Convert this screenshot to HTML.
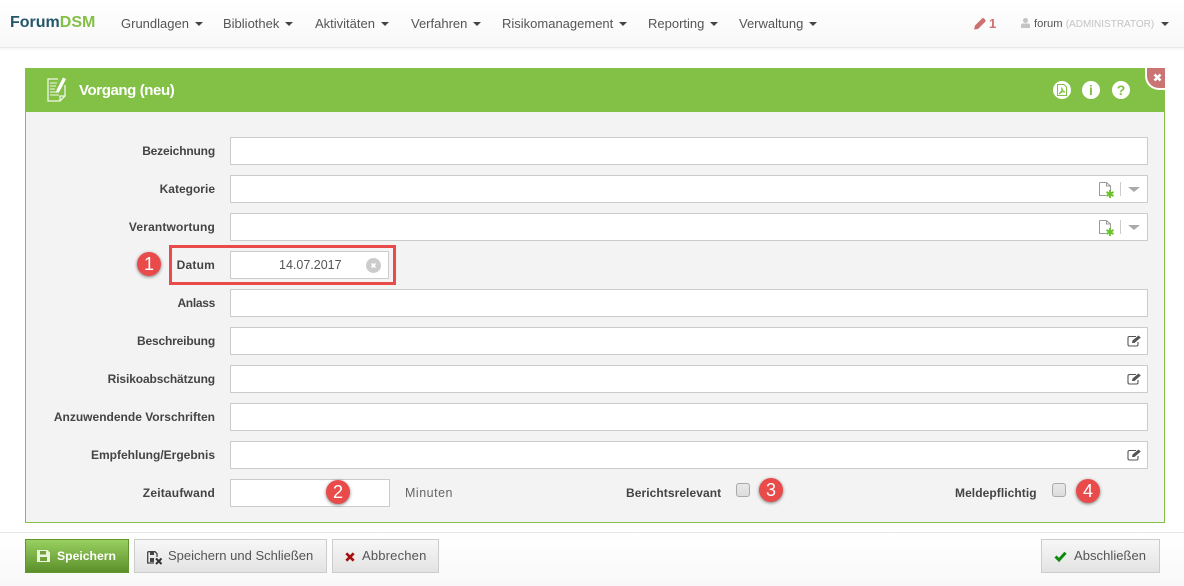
<!DOCTYPE html>
<html lang="de"><head><meta charset="utf-8"><title>Vorgang (neu)</title>
<style>
*{box-sizing:border-box}
html,body{margin:0;padding:0;width:1184px;height:586px;overflow:hidden;background:#fff;font-family:"Liberation Sans",sans-serif;font-size:13px;color:#444}
.a{position:absolute}
#nav{left:0;top:0;width:1184px;height:48px;background:linear-gradient(#fff,#f8f8f8);border-bottom:1px solid #e8e8e8;box-shadow:0 1px 2px rgba(0,0,0,.06)}
.m{position:absolute;top:15px;font-size:13px;color:#555;white-space:nowrap;line-height:18px}
.m i,.car{display:inline-block;width:0;height:0;border-left:4px solid transparent;border-right:4px solid transparent;border-top:4px solid #444;vertical-align:2px;margin-left:2px}
.lb{position:absolute;right:969px;font-weight:bold;font-size:12px;color:#444;white-space:nowrap;line-height:16px;text-align:right}
.in{position:absolute;left:230px;width:918px;height:28px;background:#fff;border:1px solid #ccc}
.btn{position:absolute;top:539px;height:34px;border:1px solid #ccc;background:linear-gradient(#f7f7f7,#e3e3e3);font-size:13px;color:#555;line-height:32px;white-space:nowrap}
.badge{position:absolute;width:24px;height:24px;border-radius:50%;background:#e94b4b;color:#fff;font-size:18px;line-height:24px;text-align:center;box-shadow:0 1px 3px rgba(0,0,0,.5)}
.cb{position:absolute;width:14px;height:14px;border:1px solid #aaa;border-radius:3px;background:linear-gradient(#e8e8e8,#ddd)}
.hi{position:absolute;top:81px;width:18px;height:18px;border-radius:50%;background:#fff;color:#82c146;font-weight:bold;font-size:14px;line-height:18px;text-align:center}
svg{position:absolute;overflow:visible}
</style></head><body>

<div id="nav" class="a"></div>
<div class="a" style="left:10px;top:13px;font-size:16px;font-weight:bold;line-height:20px;color:#24566a">Forum<span style="color:#82c146">DSM</span></div>
<div class="m" style="left:121px">Grundlagen <i></i></div>
<div class="m" style="left:223px">Bibliothek <i></i></div>
<div class="m" style="left:315px">Aktivitäten <i></i></div>
<div class="m" style="left:411px">Verfahren <i></i></div>
<div class="m" style="left:502px">Risikomanagement <i></i></div>
<div class="m" style="left:648px">Reporting <i></i></div>
<div class="m" style="left:739px">Verwaltung <i></i></div>
<svg style="left:974px;top:17px" width="12" height="13" viewBox="0 0 12 13"><path d="M0 12.500 L1 8.500 L8 1.500 Q9 .5 10 1.500 L11.500 3 Q12 4 11 5 L4 12 Z" fill="#cc7070"/></svg>
<div class="a" style="left:989px;top:15px;font-size:13px;font-weight:bold;color:#cc7070;line-height:18px">1</div>
<svg style="left:1021px;top:18px" width="9" height="10" viewBox="0 0 9 10"><circle cx="4.500" cy="2.500" r="2.500" fill="#c4c4c4"/><path d="M0 10V7.500Q0 5.500 2 5.500H7Q9 5.500 9 7.500V10Z" fill="#c4c4c4"/></svg>
<div class="a" style="left:1034px;top:15px;font-size:11.200px;line-height:18px;color:#555;white-space:nowrap">forum <span style="color:#c4c4c4;font-size:10px">(ADMINISTRATOR)</span></div>
<div class="a car" style="left:1161px;top:22px;margin:0"></div>

<div class="a" style="left:25px;top:68px;width:1140px;height:455px;background:#f3f3f3;border:1px solid #82c146"></div>
<div class="a" style="left:25px;top:68px;width:1140px;height:44px;background:#82c146"></div>
<div class="a" style="left:1145px;top:68px;width:20px;height:22px;background:#cb7474;border-left:2px solid #fff;border-bottom:2px solid #fff;border-bottom-left-radius:14px"></div>
<svg style="left:1153px;top:73px" width="9" height="9" viewBox="0 0 9 9"><path d="M1.500 1.500L7.500 7.500M7.500 1.500L1.500 7.500" stroke="#fff" stroke-width="2.600"/></svg>
<svg style="left:47px;top:76px" width="19" height="26" viewBox="0 0 19 26" fill="none" stroke="#f0f8e8" stroke-width="1.300"><path d="M11 3H1V25H13L18 20V9"/><path d="M13 25V20H18"/><path d="M3 7H10M3 10H9M3 13H8M3 16H12M3 19H12" stroke-width="1.100"/><path d="M9.500 14L16 1.500L19 3L12.500 15.500L9.500 17Z" fill="#fff" stroke="none"/></svg>
<div class="a" style="left:79px;top:81px;font-size:15px;font-weight:bold;color:#fff;line-height:19px;letter-spacing:-.4px">Vorgang (neu)</div>
<div class="hi" style="left:1053px"></div>
<svg style="left:1057px;top:84px" width="10" height="12" viewBox="0 0 10 12" fill="none" stroke="#82c146" stroke-width="1"><path d="M.5.500H7L9.500 3V11.500H.5Z"/><path d="M2 10L5 6.500 4.500 3.500 6 7 8 8 5 8Z"/></svg>
<div class="hi" style="left:1082px">i</div>
<div class="hi" style="left:1112px">?</div>

<div class="lb" style="top:143px;letter-spacing:-.17px">Bezeichnung</div><div class="in" style="top:137px"></div>
<div class="lb" style="top:181px">Kategorie</div><div class="in" style="top:175px"></div>
<div class="lb" style="top:219px;letter-spacing:.16px">Verantwortung</div><div class="in" style="top:213px"></div>
<div class="lb" style="top:257px;letter-spacing:.2px">Datum</div>
<div class="a" style="left:169px;top:245px;width:227px;height:40px;border:3px solid #e94b4b"></div>
<div class="in" style="top:251px;width:159px"></div>
<div class="a" style="left:279px;top:257px;font-size:12.500px;color:#555;line-height:17px">14.07.2017</div>
<div class="a" style="left:366px;top:258px;width:15px;height:15px;border-radius:50%;background:#ccc"></div>
<svg style="left:370px;top:262px" width="7" height="7" viewBox="0 0 7 7"><path d="M1.500 1.500L5.500 5.500M5.500 1.500L1.500 5.500" stroke="#fff" stroke-width="1.600"/></svg>
<div class="lb" style="top:295px;letter-spacing:-.3px">Anlass</div><div class="in" style="top:289px"></div>
<div class="lb" style="top:333px;letter-spacing:-.17px">Beschreibung</div><div class="in" style="top:327px"></div>
<div class="lb" style="top:371px;letter-spacing:-.12px">Risikoabschätzung</div><div class="in" style="top:365px"></div>
<div class="lb" style="top:409px">Anzuwendende Vorschriften</div><div class="in" style="top:403px"></div>
<div class="lb" style="top:447px">Empfehlung/Ergebnis</div><div class="in" style="top:441px"></div>
<div class="lb" style="top:485px;letter-spacing:.2px">Zeitaufwand</div><div class="in" style="top:479px;width:160px"></div>
<div class="a" style="left:405px;top:485px;font-size:12.500px;color:#666;line-height:17px;letter-spacing:.5px">Minuten</div>
<div class="a" style="left:626px;top:485px;font-size:12px;font-weight:bold;line-height:16px;color:#444;white-space:nowrap;letter-spacing:.07px">Berichtsrelevant</div>
<div class="cb" style="left:736px;top:483px"></div>
<div class="a" style="left:955px;top:485px;font-size:12px;font-weight:bold;line-height:16px;color:#444;white-space:nowrap;letter-spacing:.07px">Meldepflichtig</div>
<div class="cb" style="left:1052px;top:483px"></div>

<svg style="left:1099px;top:182px" width="16" height="16" viewBox="0 0 16 16" fill="none"><path d="M.5.500H7.500L11.500 4V8M7.500.500V4H11.500M.5.500V13.500H7" stroke="#999" stroke-width="1"/><path d="M11 8V16M7.500 10L14.500 14M14.500 10L7.500 14" stroke="#6cbf2d" stroke-width="1.900"/></svg>
<div class="a" style="left:1120px;top:182px;width:1px;height:14px;background:#ccc"></div>
<div class="a" style="left:1128px;top:187px;width:0;height:0;border-left:6px solid transparent;border-right:6px solid transparent;border-top:5px solid #aaa"></div>
<svg style="left:1099px;top:220px" width="16" height="16" viewBox="0 0 16 16" fill="none"><path d="M.5.500H7.500L11.500 4V8M7.500.500V4H11.500M.5.500V13.500H7" stroke="#999" stroke-width="1"/><path d="M11 8V16M7.500 10L14.500 14M14.500 10L7.500 14" stroke="#6cbf2d" stroke-width="1.900"/></svg>
<div class="a" style="left:1120px;top:220px;width:1px;height:14px;background:#ccc"></div>
<div class="a" style="left:1128px;top:225px;width:0;height:0;border-left:6px solid transparent;border-right:6px solid transparent;border-top:5px solid #aaa"></div>

<svg style="left:1127px;top:335px" width="15" height="12" viewBox="0 0 15 12" fill="none"><path d="M9 1.500H2.500Q1 1.500 1 3V9.500Q1 11 2.500 11H9.500Q11 11 11 9.500V7" stroke="#555" stroke-width="1.100"/><path d="M5 8L5.500 5.500 11.500 .5 13.800 2.500 7.500 8Z" fill="#555"/></svg>
<svg style="left:1127px;top:373px" width="15" height="12" viewBox="0 0 15 12" fill="none"><path d="M9 1.500H2.500Q1 1.500 1 3V9.500Q1 11 2.500 11H9.500Q11 11 11 9.500V7" stroke="#555" stroke-width="1.100"/><path d="M5 8L5.500 5.500 11.500 .5 13.800 2.500 7.500 8Z" fill="#555"/></svg>
<svg style="left:1127px;top:449px" width="15" height="12" viewBox="0 0 15 12" fill="none"><path d="M9 1.500H2.500Q1 1.500 1 3V9.500Q1 11 2.500 11H9.500Q11 11 11 9.500V7" stroke="#555" stroke-width="1.100"/><path d="M5 8L5.500 5.500 11.500 .5 13.800 2.500 7.500 8Z" fill="#555"/></svg>

<div class="badge" style="left:137px;top:252px">1</div>
<div class="badge" style="left:326px;top:480px">2</div>
<div class="badge" style="left:759px;top:478px">3</div>
<div class="badge" style="left:1076px;top:479px">4</div>

<div class="a" style="left:0;top:532px;width:1184px;height:54px;background:linear-gradient(#fff,#f8f8f8);border-top:1px solid #e6e6e6"></div>
<div class="btn" style="left:25px;width:104px;background:linear-gradient(#98d060,#5c8f2b);border-color:#5f962d;color:#fff;padding-left:31px;font-weight:bold;font-size:12.200px">Speichern</div>
<svg style="left:37px;top:550px" width="13" height="12" viewBox="0 0 13 12"><path d="M0 0H10.500L13 2.500V12H0Z" fill="#e8f5da"/><rect x="3" y="1" width="6" height="3.500" fill="#6fa23a"/><rect x="3" y="7" width="7" height="4" fill="#6fa23a"/></svg>
<div class="btn" style="left:134px;width:193px;padding-left:33px">Speichern und Schließen</div>
<svg style="left:147px;top:551px" width="16" height="14" viewBox="0 0 16 14" fill="none"><path d="M.7.700H8L10 2.700V6M.7.700V12H7" stroke="#444" stroke-width="1.300"/><rect x="3" y="1" width="4" height="3" fill="#444"/><rect x="3" y="7" width="4" height="4" fill="#444"/><path d="M9 7.500L14.500 13M14.500 7.500L9 13" stroke="#333" stroke-width="2"/></svg>
<div class="btn" style="left:332px;width:107px;padding-left:29px;letter-spacing:.18px">Abbrechen</div>
<svg style="left:345px;top:552px" width="10" height="10" viewBox="0 0 10 10"><path d="M1.300 1.300L8.700 8.700M8.700 1.300L1.300 8.700" stroke="#a80f0f" stroke-width="2.700"/></svg>
<div class="btn" style="left:1041px;width:119px;padding-left:32px;letter-spacing:.05px">Abschließen</div>
<svg style="left:1054px;top:551px" width="13" height="11" viewBox="0 0 13 11"><path d="M1.500 5.500L5 9 11.500 1.800" fill="none" stroke="#0c8a0c" stroke-width="3"/></svg>
</body></html>
